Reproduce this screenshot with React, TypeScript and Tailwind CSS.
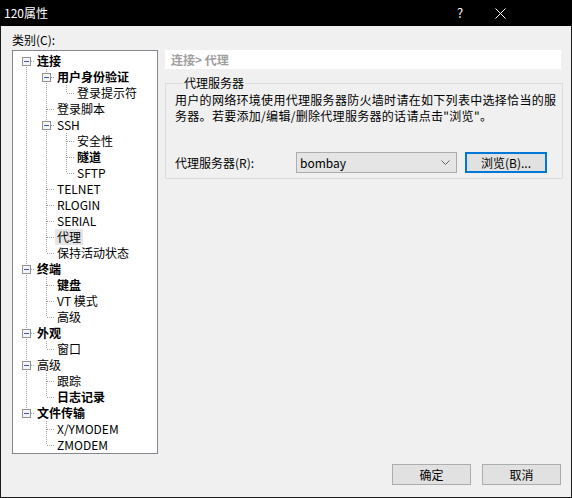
import React from 'react'

type Node = { label: string; bold?: boolean; selected?: boolean; children?: Node[] }

const tree: Node[] = [
  {
    label: '连接',
    bold: true,
    children: [
      { label: '用户身份验证', bold: true, children: [{ label: '登录提示符' }] },
      { label: '登录脚本' },
      {
        label: 'SSH',
        children: [{ label: '安全性' }, { label: '隧道', bold: true }, { label: 'SFTP' }],
      },
      { label: 'TELNET' },
      { label: 'RLOGIN' },
      { label: 'SERIAL' },
      { label: '代理', selected: true },
      { label: '保持活动状态' },
    ],
  },
  {
    label: '终端',
    bold: true,
    children: [{ label: '键盘', bold: true }, { label: 'VT 模式' }, { label: '高级' }],
  },
  { label: '外观', bold: true, children: [{ label: '窗口' }] },
  { label: '高级', children: [{ label: '跟踪' }, { label: '日志记录', bold: true }] },
  { label: '文件传输', bold: true, children: [{ label: 'X/YMODEM' }, { label: 'ZMODEM' }] },
]

type Row = { node: Node; level: number; guides: boolean[]; hasNext: boolean; first: boolean }

function flatten(nodes: Node[], level: number, guides: boolean[], out: Row[]): Row[] {
  nodes.forEach((n, i) => {
    const hasNext = i < nodes.length - 1
    out.push({ node: n, level, guides, hasNext, first: level === 0 && i === 0 })
    if (n.children) flatten(n.children, level + 1, [...guides, hasNext], out)
  })
  return out
}

const DOT = '#a0a0a0'

function Guide({ on }: { on: boolean }) {
  return (
    <svg width="20" height="16" className="shrink-0" shapeRendering="crispEdges">
      {on && <line x1="10.5" y1="0" x2="10.5" y2="16" stroke={DOT} strokeDasharray="1 1" />}
    </svg>
  )
}

function Connector({ row }: { row: Row }) {
  const box = !!row.node.children
  return (
    <svg width="20" height="16" className="shrink-0" shapeRendering="crispEdges">
      {!row.first && <line x1="10.5" y1="0" x2="10.5" y2="8" stroke={DOT} strokeDasharray="1 1" />}
      {row.hasNext && <line x1="10.5" y1="8" x2="10.5" y2="16" stroke={DOT} strokeDasharray="1 1" />}
      <line x1={box ? 15 : 11} y1="8.5" x2="19" y2="8.5" stroke={DOT} strokeDasharray="1 1" />
      {box && (
        <>
          <rect x="6.5" y="4.5" width="8" height="8" fill="#f4f4f4" stroke="#919191" />
          <line x1="8" y1="8.5" x2="13" y2="8.5" stroke="#3a5fa0" />
        </>
      )}
    </svg>
  )
}

function Tree() {
  const rows = flatten(tree, 0, [], [])
  return (
    <div className="w-[146px] h-[404px] bg-white border border-[#828790] pl-[3px] pt-[2px] overflow-hidden">
      {rows.map((r, i) => (
        <div key={i} className="flex h-4 items-center">
          {r.guides.map((g, j) => (
            <Guide key={j} on={g} />
          ))}
          <Connector row={r} />
          <span
            className={`-ml-px px-[2px] h-4 leading-4 text-[12px] whitespace-nowrap text-black ${
              r.node.bold ? 'font-bold' : ''
            } ${r.node.selected ? 'bg-[#e5e5e5]' : ''}`}
          >
            {r.node.label}
          </span>
        </div>
      ))}
    </div>
  )
}

function ProxyPanel() {
  return (
    <div className="w-[396px]">
      <div className="h-[19px] bg-white pl-[6px] leading-[19px] text-[12px] font-bold text-[#a0a0a0]">
        连接&gt; 代理
      </div>
      <fieldset className="mt-[6px] border border-[#dcdcdc] pl-[9px] pr-[6px] pb-[5px]">
        <legend className="ml-[8px] px-[1px] text-[12px] leading-4 text-black">代理服务器</legend>
        <p className="mt-px text-[12px] leading-4 tracking-[0.3px] text-black whitespace-nowrap">
          用户的网络环境使用代理服务器防火墙时请在如下列表中选择恰当的服
          <br />
          务器。若要添加/编辑/删除代理服务器的话请点击"浏览"。
        </p>
        <div className="mt-[28px] flex items-center">
          <span className="w-[121px] text-[12px] leading-4 text-black">代理服务器(R):</span>
          <div className="w-[161px] h-[21px] border border-[#adadad] bg-[#e5e5e5] flex items-center justify-between pl-[3px] pr-[6px]">
            <span className="text-[12px] leading-4 text-black">bombay</span>
            <svg width="9" height="6" viewBox="0 0 9 6">
              <path d="M0.5 0.5 L4.5 4.5 L8.5 0.5" fill="none" stroke="#606060" strokeWidth="1" />
            </svg>
          </div>
          <button className="ml-[8px] w-[82px] h-[21px] border-2 border-[#0078d7] bg-[#e1e1e1] text-[12px] leading-4 text-black">
            浏览(B)...
          </button>
        </div>
      </fieldset>
    </div>
  )
}

export default function App() {
  return (
    <div className="w-[572px] h-[498px] bg-[#f0f0f0] border-x border-b border-[#1c1c1c] flex flex-col font-['Noto_Sans_CJK_SC','Liberation_Sans',sans-serif] select-none">
      {/* Title bar */}
      <div className="h-[26px] bg-black -mx-px flex items-center pl-[4px] pr-[66px] text-white">
        <span className="flex-1 text-[12px] leading-4">120属性</span>
        <span className="w-[12px] text-center text-[13px] leading-4">?</span>
        <svg width="11" height="11" viewBox="0 0 11 11" className="ml-[29px]">
          <path d="M0.5 0.5 L10.5 10.5 M10.5 0.5 L0.5 10.5" stroke="#ffffff" strokeWidth="1" />
        </svg>
      </div>

      <div className="flex-1 pl-[11px] pr-[10px]">
        <div className="mt-[6px] h-4 text-[12px] leading-4 text-black">类别(C):</div>
        <div className="mt-[2px] flex gap-[7px]">
          <Tree />
          <ProxyPanel />
        </div>
        <div className="mt-[10px] flex justify-end gap-[11px]">
          <button className="w-[79px] h-[21px] border border-[#adadad] bg-[#e1e1e1] text-[12px] leading-4 text-black">
            确定
          </button>
          <button className="w-[79px] h-[21px] border border-[#adadad] bg-[#e1e1e1] text-[12px] leading-4 text-black">
            取消
          </button>
        </div>
      </div>
    </div>
  )
}
